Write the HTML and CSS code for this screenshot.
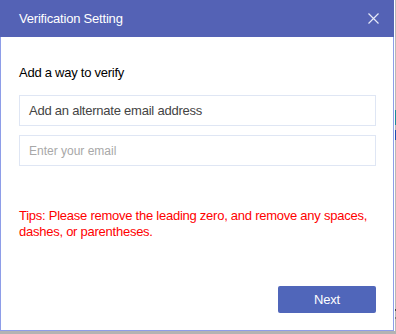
FILE: index.html
```html
<!DOCTYPE html>
<html>
<head>
<meta charset="utf-8">
<link rel="stylesheet" href="styles.css">
</head>
<body>
<div class="page">
  <div class="row">
    <div class="dialog">
      <header class="dlg-head">
        <span class="dlg-title">Verification Setting</span>
        <button class="close" aria-label="Close">
          <svg width="11" height="11" viewBox="0 0 11 11"><path d="M0.5 0.5 L10.5 10.5 M10.5 0.5 L0.5 10.5" stroke="#e6e9f7" stroke-width="1.2" fill="none"/></svg>
        </button>
      </header>
      <div class="dlg-body">
        <p class="label">Add a way to verify</p>
        <div class="field select">Add an alternate email address</div>
        <input class="field input" type="text" placeholder="Enter your email">
        <p class="tips">Tips: Please remove the leading zero, and remove any spaces, dashes, or parentheses.</p>
      </div>
      <footer class="dlg-foot">
        <button class="next">Next</button>
      </footer>
    </div>
    <div class="side">
      <span class="bit teal"></span>
      <span class="bit blue"></span>
      <span class="bit dark"></span>
      <span class="bit dark2"></span>
    </div>
  </div>
  <div class="bottom"></div>
</div>
</body>
</html>
```

FILE: styles.css
```css
* { box-sizing: border-box; }
html, body { margin: 0; padding: 0; }
body {
  width: 396px;
  height: 334px;
  overflow: hidden;
  background: #ffffff;
  font-family: "Liberation Sans", Arial, sans-serif;
}
.page { display: flex; flex-direction: column; height: 334px; }
.row { display: flex; height: 331px; }
.dialog {
  width: 394px;
  height: 331px;
  border: 1px solid #8e9de8;
  border-top: 0;
  background: #fff;
  display: flex;
  flex-direction: column;
}
.dlg-head {
  height: 37px;
  margin: 0 -1px;
  background: #5462b5;
  display: flex;
  align-items: center;
  justify-content: space-between;
  padding: 0 15px 0 19px;
}
.dlg-title {
  color: #ffffff;
  font-size: 13px;
  letter-spacing: -0.2px;
  line-height: 16px;
}
.close {
  border: 0;
  background: none;
  padding: 0;
  width: 11px;
  height: 11px;
  display: flex;
  cursor: pointer;
}
.dlg-body {
  flex: 1;
  padding: 28px 17px 0 18px;
  display: flex;
  flex-direction: column;
}
.label {
  margin: 0 0 15px;
  font-size: 13px;
  letter-spacing: -0.25px;
  line-height: 15px;
  color: #000;
}
.field {
  width: 357px;
  height: 31px;
  border: 1px solid #dfe6f4;
  background: #fff;
  padding: 0 9px;
  font-family: "Liberation Sans", Arial, sans-serif;
  outline: none;
}
.select {
  display: flex;
  align-items: center;
  font-size: 13px;
  letter-spacing: -0.23px;
  color: #444;
}
.input {
  margin-top: 9px;
  font-size: 12px;
  color: #333;
}
.input::placeholder { color: #a8a8a8; }
.tips {
  margin: 42px 0 0;
  font-size: 13px;
  letter-spacing: -0.25px;
  line-height: 16px;
  color: #ff0000;
}
.dlg-foot {
  display: flex;
  justify-content: flex-end;
  padding: 0 17px 17px 0;
}
.next {
  width: 98px;
  height: 27px;
  border: 0;
  border-radius: 2px;
  background: #5066ba;
  color: #fff;
  font-family: "Liberation Sans", Arial, sans-serif;
  font-size: 13px;
  letter-spacing: -0.2px;
  cursor: pointer;
}
.side {
  flex: 1;
  position: relative;
  background: #fff;
  border-right: 1px solid #b8b8b8;
}
.bit { position: absolute; left: 1px; width: 2px; }
.teal { top: 110px; height: 15px; background: #1b8b98; }
.blue { top: 130px; height: 10px; background: #1d4fae; }
.dark { top: 309px; height: 2px; background: #444; }
.dark2 { top: 317px; height: 2px; background: #777; }
.bottom { height: 3px; background: #b3b3b3; }
```
